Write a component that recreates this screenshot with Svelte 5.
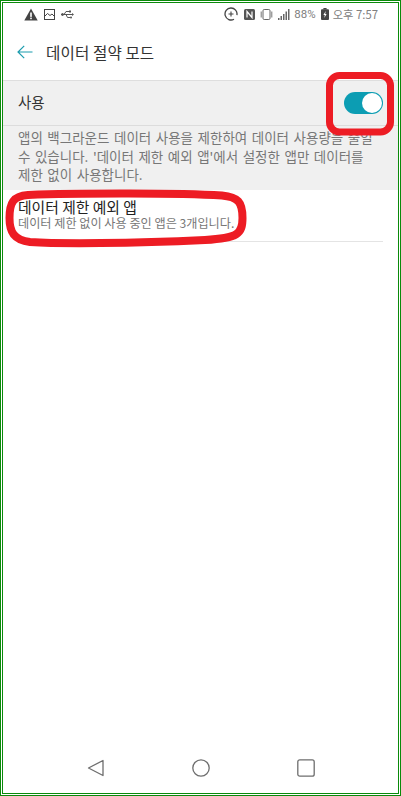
<script lang="ts">
  const description =
    "앱의 백그라운드 데이터 사용을 제한하여 데이터 사용량을 줄일 수 있습니다. '데이터 제한 예외 앱'에서 설정한 앱만 데이터를 제한 없이 사용합니다.";
</script>

<div class="frame">
  <div class="screen">
    <header class="status">
      <div class="status-group">
        <svg width="14" height="13" viewBox="0 0 14 13"><path d="M7 0.5 13.7 12.5H0.3Z" fill="#444" /><rect x="6.2" y="4.5" width="1.6" height="4.4" fill="#fff" /><rect x="6.2" y="9.6" width="1.6" height="1.6" fill="#fff" /></svg>
        <svg width="11" height="11" viewBox="0 0 11 11" fill="none" stroke="#444"><rect x="0.5" y="0.5" width="10" height="10" /><path d="M1 7 3.5 4.5 6 6.5 8 5 10 7" /></svg>
        <svg class="usb" width="13" height="9" viewBox="0 0 13 9" fill="none" stroke="#555"><path d="M0 4.5H11M3 4.5 5 1.5H8M5 4.5 6.5 7.5H9" /><circle cx="1.5" cy="4.5" r="1" fill="#555" /><rect x="8" y="0.5" width="2" height="2" fill="#555" stroke="none" /><circle cx="10" cy="7.5" r="1" fill="#555" stroke="none" /><path d="M11 3 13 4.5 11 6Z" fill="#555" stroke="none" /></svg>
      </div>
      <div class="status-group right">
        <svg class="sync" width="14" height="14" viewBox="0 0 14 14" fill="none" stroke="#444" stroke-width="1.3"><path d="M10 12.2A6 6 0 1 1 12.9 8.2" /><path d="M7 4.5V9.5M4.5 7H9.5" stroke-width="1.1" /></svg>
        <svg class="nfc" width="11" height="11" viewBox="0 0 11 11"><rect width="11" height="11" rx="1.5" fill="#555" /><path d="M3 8.5V2.5L8 8.5V2.5" stroke="#fff" fill="none" stroke-width="1.2" /></svg>
        <svg class="vibrate" width="13" height="11" viewBox="0 0 13 11" fill="none" stroke="#666"><rect x="3" y="0.5" width="7" height="10" rx="1.2" /><path d="M1.2 2.5V8.5M11.8 2.5V8.5" stroke-width="0.9" /></svg>
        <svg class="signal" width="12" height="11" viewBox="0 0 12 11" fill="#666"><rect x="0" y="9" width="1.5" height="2" /><rect x="2.5" y="7" width="1.5" height="4" /><rect x="5" y="5" width="1.5" height="6" /><rect x="7.5" y="2.5" width="1.5" height="8.5" /><rect x="10" y="0" width="1.5" height="11" /></svg>
        <span class="pct">88%</span>
        <svg class="battery" width="8" height="12" viewBox="0 0 8 12"><rect x="2.4" width="3.2" height="1.5" fill="#444" /><rect y="1.2" width="8" height="10.8" rx="1" fill="#444" /><path d="M4.7 3 2.4 7H3.8L3.3 10 5.6 6H4.2Z" fill="#fff" /></svg>
        <span class="clock">오후 7:57</span>
      </div>
    </header>

    <div class="app-bar">
      <svg width="16" height="14" viewBox="0 0 16 14" fill="none" stroke="#1b9cae" stroke-width="1.2"><path d="M15.5 7H1M7.2 0.8 1 7 7.2 13.2" /></svg>
      <h1>데이터 절약 모드</h1>
    </div>

    <section class="saver">
      <div class="toggle-row">
        <span class="toggle-label">사용</span>
        <div class="switch"><div class="knob"></div></div>
      </div>
      <p>{description}</p>
    </section>

    <div class="exception">
      <div class="exception-title">데이터 제한 예외 앱</div>
      <div class="exception-sub">데이터 제한 없이 사용 중인 앱은 3개입니다.</div>
    </div>

    <div class="spacer"></div>

    <nav class="nav">
      <svg width="18" height="18" viewBox="0 0 18 18" fill="none" stroke="#6e6e6e" stroke-width="1.3" stroke-linejoin="round"><path d="M16 1.5V16.5L1.5 9Z" /></svg>
      <svg width="18" height="18" viewBox="0 0 18 18" fill="none" stroke="#6e6e6e" stroke-width="1.3"><circle cx="9" cy="9" r="8.2" /></svg>
      <svg width="18" height="18" viewBox="0 0 18 18" fill="none" stroke="#6e6e6e" stroke-width="1.3"><rect x="0.8" y="0.8" width="16.4" height="16.4" rx="2" /></svg>
    </nav>
  </div>

  <svg class="marks" width="401" height="796" viewBox="0 0 401 796" fill="none" stroke="#ed1c24">
    <rect x="329.5" y="75.5" width="61" height="56.5" rx="10" stroke-width="7" />
    <path stroke-width="8" d="M28 195C80 193 180 193 222 195.5C238 197 242.5 202 242.5 218C242.5 234 238 238 205 240C130 243.5 60 244 30 242C14 240 9.5 232 9.5 218C9.5 203 13 196 28 195Z" />
  </svg>
</div>

<style>
  :global(body) {
    margin: 0;
    background: #fff;
  }
  .frame {
    position: relative;
    width: 401px;
    height: 796px;
    box-sizing: border-box;
    border: 1px solid #0a8a0a;
    font-family: "Noto Sans CJK KR", "Noto Sans", sans-serif;
    overflow: hidden;
  }
  .screen {
    width: 100%;
    height: 100%;
    box-sizing: border-box;
    border: 1px solid #fff;
    outline: 1px solid #0a8a0a;
    outline-offset: -2px;
    padding: 1px;
    display: flex;
    flex-direction: column;
  }
  .status {
    height: 22px;
    flex: none;
    display: flex;
    align-items: center;
    justify-content: space-between;
    padding: 0 20px 0 21px;
  }
  .status-group {
    display: flex;
    align-items: center;
    gap: 6px;
  }
  .status-group.right {
    gap: 0;
    color: #808080;
    font-size: 11.3px;
  }
  .nfc {
    margin-left: 6px;
  }
  .vibrate {
    margin-left: 5px;
  }
  .signal {
    margin-left: 5px;
  }
  .pct {
    margin-left: 4px;
    font-family: "Roboto", sans-serif;
    font-size: 11.5px;
  }
  .battery {
    margin-left: 5px;
  }
  .clock {
    margin-left: 4px;
  }
  .app-bar {
    height: 55px;
    box-sizing: border-box;
    padding: 0 0 2px 14px;
    flex: none;
    display: flex;
    align-items: center;
    gap: 13px;
  }
  h1 {
    margin: 0;
    font-size: 15.6px;
    font-weight: 400;
    color: #333;
    letter-spacing: 0.1px;
  }
  .saver {
    flex: none;
    background: #f0f0f0;
    border-top: 1px solid #dedede;
  }
  .toggle-row {
    height: 44px;
    display: flex;
    align-items: center;
    justify-content: space-between;
    padding: 0 15px;
    border-bottom: 1px solid #dcdcdc;
    font-size: 14.5px;
    color: #333;
  }
  .toggle-label {
    padding-bottom: 3px;
  }
  .switch {
    width: 39px;
    height: 22px;
    box-sizing: border-box;
    border-radius: 11px;
    background: #0c9db3;
    display: flex;
    justify-content: flex-end;
    padding: 1px;
  }
  .knob {
    width: 20px;
    height: 20px;
    border-radius: 50%;
    background: #fff;
  }
  .saver p {
    margin: 0;
    padding: 2px 18px 6px 15px;
    font-size: 13.5px;
    word-spacing: 1.5px;
    word-break: keep-all;
    line-height: 18.5px;
    color: #777;
  }
  .exception {
    flex: none;
    margin: 0 15px;
    height: 52px;
    box-sizing: border-box;
    padding-top: 7px;
    border-bottom: 1px solid #e4e4e4;
  }
  .exception-title {
    font-size: 14.8px;
    line-height: 19px;
    color: #222;
  }
  .exception-sub {
    font-size: 12.15px;
    line-height: 13px;
    color: #777;
  }
  .spacer {
    flex: 1;
  }
  .nav {
    flex: none;
    height: 50px;
    display: flex;
    align-items: center;
    justify-content: center;
    gap: 87px;
  }
  .marks {
    position: absolute;
    left: -1px;
    top: -1px;
    pointer-events: none;
  }
</style>
